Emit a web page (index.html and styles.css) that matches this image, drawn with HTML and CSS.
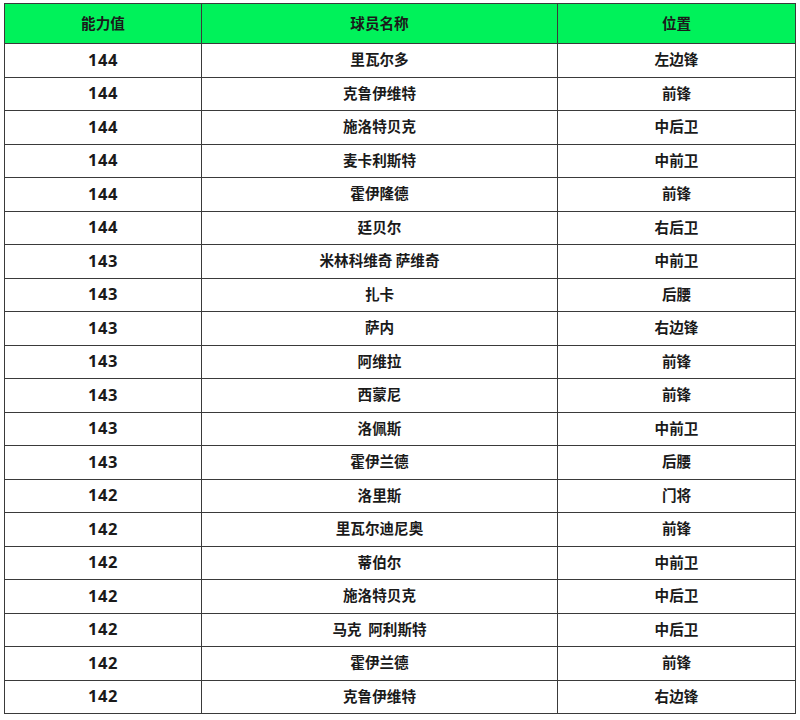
FILE: index.html
```html
<!DOCTYPE html>
<html lang="zh">
<head>
<meta charset="utf-8">
<link rel="stylesheet" href="styles.css">
</head>
<body>
<table class="tbl">
<colgroup><col class="c1"><col class="c2"><col class="c3"></colgroup>
<thead>
<tr><th>能力值</th><th>球员名称</th><th>位置</th></tr>
</thead>
<tbody>
<tr><td class="num">144</td><td>里瓦尔多</td><td>左边锋</td></tr>
<tr><td class="num">144</td><td>克鲁伊维特</td><td>前锋</td></tr>
<tr><td class="num">144</td><td>施洛特贝克</td><td>中后卫</td></tr>
<tr><td class="num">144</td><td>麦卡利斯特</td><td>中前卫</td></tr>
<tr><td class="num">144</td><td>霍伊隆德</td><td>前锋</td></tr>
<tr><td class="num">144</td><td>廷贝尔</td><td>右后卫</td></tr>
<tr><td class="num">143</td><td>米林科维奇 萨维奇</td><td>中前卫</td></tr>
<tr><td class="num">143</td><td>扎卡</td><td>后腰</td></tr>
<tr><td class="num">143</td><td>萨内</td><td>右边锋</td></tr>
<tr><td class="num">143</td><td>阿维拉</td><td>前锋</td></tr>
<tr><td class="num">143</td><td>西蒙尼</td><td>前锋</td></tr>
<tr><td class="num">143</td><td>洛佩斯</td><td>中前卫</td></tr>
<tr><td class="num">143</td><td>霍伊兰德</td><td>后腰</td></tr>
<tr><td class="num">142</td><td>洛里斯</td><td>门将</td></tr>
<tr><td class="num">142</td><td>里瓦尔迪尼奥</td><td>前锋</td></tr>
<tr><td class="num">142</td><td>蒂伯尔</td><td>中前卫</td></tr>
<tr><td class="num">142</td><td>施洛特贝克</td><td>中后卫</td></tr>
<tr><td class="num">142</td><td>马克&nbsp;&nbsp;阿利斯特</td><td>中后卫</td></tr>
<tr><td class="num">142</td><td>霍伊兰德</td><td>前锋</td></tr>
<tr><td class="num">142</td><td>克鲁伊维特</td><td>右边锋</td></tr>
</tbody>
</table>
</body>
</html>
```

FILE: styles.css
```css
html, body {
  margin: 0;
  padding: 0;
  background: #ffffff;
}
body {
  padding: 3px 0 0 4px;
  font-family: "Noto Sans CJK SC", "Open Sans", sans-serif;
}
.tbl {
  border-collapse: collapse;
  table-layout: fixed;
  width: 791px;
  color: #1a1a1a;
}
.c1 { width: 197px; }
.c2 { width: 356px; }
.c3 { width: 238px; }
.tbl th, .tbl td {
  border: 1px solid #3a3a3a;
  text-align: center;
  vertical-align: middle;
  padding: 0 0 1px 0;
  font-weight: 700;
  font-size: 14.6px;
  line-height: 1;
}
.tbl th {
  background: #00f25a;
  height: 38px;
}
.tbl td {
  height: 31.5px;
}
.tbl td.num {
  font-family: "Open Sans", sans-serif;
  font-size: 16.5px;
  letter-spacing: 0.6px;
}
```
